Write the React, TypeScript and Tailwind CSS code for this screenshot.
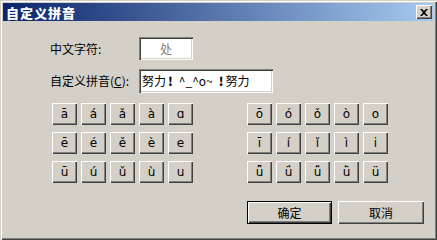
import React from "react";

const raised =
  "shadow-[inset_1px_1px_#ffffff,inset_-1px_-1px_#404040,inset_-2px_-2px_#808080]";
const sunken =
  "shadow-[inset_1px_1px_#808080,inset_2px_2px_#404040,inset_-1px_-1px_#ffffff,inset_-2px_-2px_#d4d0c8]";

const left = [
  ["ā", "á", "ǎ", "à", "ɑ"],
  ["ē", "é", "ě", "è", "e"],
  ["ū", "ú", "ǔ", "ù", "u"],
];
const right = [
  ["ō", "ó", "ǒ", "ò", "o"],
  ["ī", "í", "ǐ", "ì", "i"],
  ["ǖ", "ǘ", "ǚ", "ǜ", "ü"],
];

function Grid({ rows }: { rows: string[][] }) {
  return (
    <div className="grid grid-cols-[repeat(5,25px)] gap-x-[4px] gap-y-[7px]">
      {rows.flat().map((c, i) => (
        <div
          key={i}
          className={`w-[25px] h-[22px] bg-[#d4d0c8] ${raised} flex items-center justify-center text-[12px] text-black pb-[1px]`}
          style={{ fontFamily: '"DejaVu Sans", sans-serif' }}
        >
          {c}
        </div>
      ))}
    </div>
  );
}

export default function App() {
  return (
    <div
      className="w-[437px] h-[240px] bg-[#d4d0c8] p-[3px] shadow-[inset_1px_1px_#d4d0c8,inset_2px_2px_#ffffff,inset_-1px_-1px_#404040,inset_-2px_-2px_#808080] flex flex-col"
      style={{ fontFamily: '"Noto Sans CJK SC", "Noto Sans", sans-serif' }}
    >
      <div className="h-[18px] bg-[linear-gradient(to_right,#0a246a,#a6caf0)] flex items-center justify-between pl-[3px] pr-[2px]">
        <span className="text-white font-black text-[13px] leading-none tracking-[1px]">自定义拼音</span>
        <div className={`w-[16px] h-[14px] bg-[#d4d0c8] ${raised} flex items-center justify-center`}>
          <svg width="8" height="7" viewBox="0 0 8 7">
            <path d="M0 0h2l2 2 2-2h2L5 3.5 8 7H6L4 5 2 7H0l3-3.5z" fill="#000" />
          </svg>
        </div>
      </div>
      <div className="pl-[47px] pt-[16px] flex flex-col text-[12px] text-black">
        <div className="flex items-center h-[23px]">
          <span className="w-[89px]">中文字符:</span>
          <div className={`w-[54px] h-[23px] bg-white ${sunken} flex items-center justify-center text-[#808080]`}>
            处
          </div>
        </div>
        <div className="flex items-center h-[24px] mt-[9px]">
          <span className="w-[89px]">
            自定义拼音(<span className="underline">C</span>):
          </span>
          <div className={`w-[134px] h-[24px] bg-white ${sunken} flex items-center pl-[3px] whitespace-nowrap`}>
            努力<b className="font-black ml-[2px] mr-[6px]">!</b>^_^o~<b className="font-black ml-[6px] mr-[2px]">!</b>努力
          </div>
        </div>
        <div className="flex mt-[10px] pl-[2px] gap-[54px]">
          <Grid rows={left} />
          <Grid rows={right} />
        </div>
        <div className="flex justify-end gap-[6px] mt-[18px] pr-[10px]">
          <div className="w-[85px] h-[23px] border border-black">
            <div className={`w-full h-full bg-[#d4d0c8] ${raised} flex items-center justify-center`}>确定</div>
          </div>
          <div className={`w-[86px] h-[23px] bg-[#d4d0c8] ${raised} flex items-center justify-center`}>取消</div>
        </div>
      </div>
    </div>
  );
}
